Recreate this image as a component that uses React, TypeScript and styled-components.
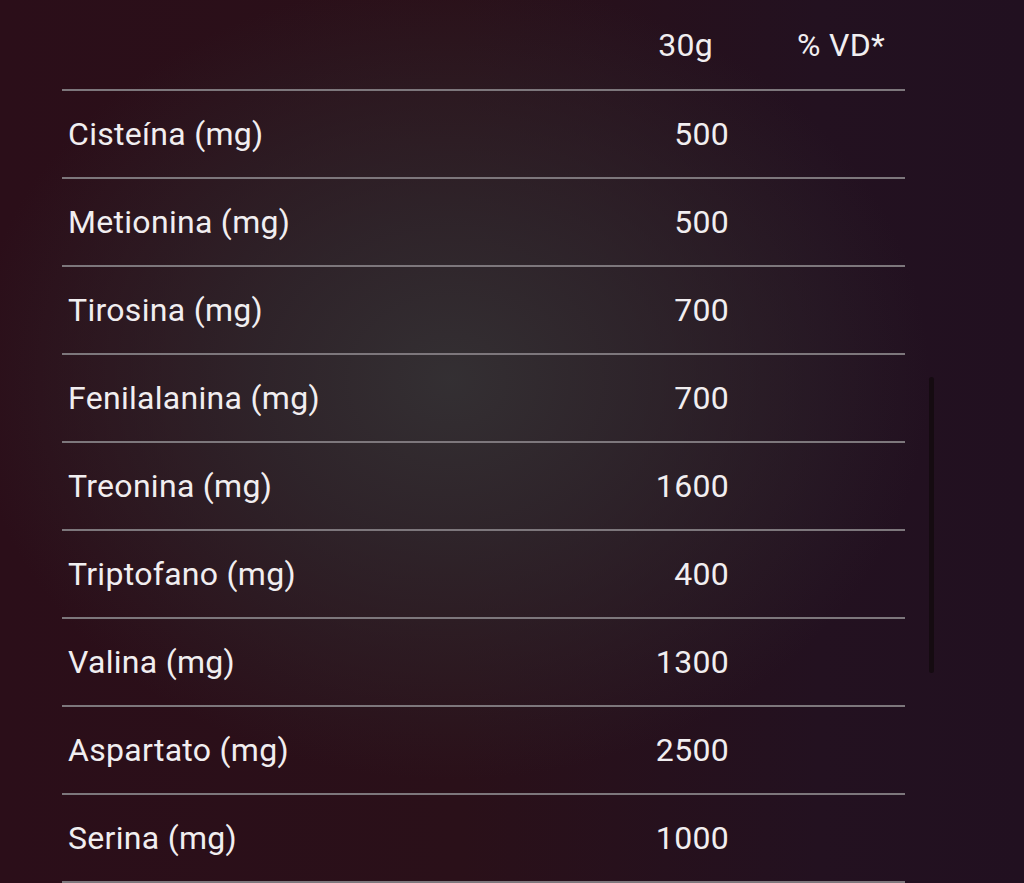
import styled, { createGlobalStyle } from 'styled-components';

interface Nutrient {
  name: string;
  amount: string;
  vd?: string;
}

const nutrients: Nutrient[] = [
  { name: 'Cisteína (mg)', amount: '500' },
  { name: 'Metionina (mg)', amount: '500' },
  { name: 'Tirosina (mg)', amount: '700' },
  { name: 'Fenilalanina (mg)', amount: '700' },
  { name: 'Treonina (mg)', amount: '1600' },
  { name: 'Triptofano (mg)', amount: '400' },
  { name: 'Valina (mg)', amount: '1300' },
  { name: 'Aspartato (mg)', amount: '2500' },
  { name: 'Serina (mg)', amount: '1000' },
];

const GlobalStyle = createGlobalStyle`
  html, body {
    margin: 0;
    padding: 0;
    height: 100%;
    overflow: hidden;
  }
  body {
    font-family: Roboto, "Liberation Sans", sans-serif;
    background: #260e18;
  }
`;

const Page = styled.div`
  position: relative;
  width: 1024px;
  height: 883px;
  overflow: hidden;
  background:
    radial-gradient(ellipse 480px 400px at 450px 380px, rgba(52, 49, 52, 0.95) 0%, rgba(48, 42, 47, 0.75) 40%, rgba(40, 22, 32, 0) 100%),
    linear-gradient(90deg, #2b0e19 0%, #2a1019 45%, #231120 80%, #211020 100%);
`;

const Table = styled.div`
  margin-left: 62px;
  width: 843px;
  display: grid;
  grid-template-columns: 1fr 140px 176px;
  color: #f1eef0;
  font-size: 32px;
  letter-spacing: 0.3px;
`;

const Cell = styled.div<{ $align?: 'left' | 'right'; $header?: boolean; $pad?: string }>`
  height: ${p => (p.$header ? '89px' : '86px')};
  border-bottom: 2px solid #7d777c;
  display: flex;
  align-items: center;
  justify-content: ${p => (p.$align === 'right' ? 'flex-end' : 'flex-start')};
  padding: ${p => p.$pad ?? '0'};
  box-sizing: content-box;
  white-space: nowrap;
`;

const Scrollbar = styled.div`
  position: absolute;
  left: 929px;
  top: 377px;
  width: 5px;
  height: 296px;
  border-radius: 3px;
  background: #150b11;
`;

export default function App() {
  return (
    <>
      <GlobalStyle />
      <Page>
        <Table>
          <Cell $header />
          <Cell $header $align="right" $pad="0 16px 0 0">30g</Cell>
          <Cell $header $pad="0 0 0 68px">% VD*</Cell>
          {nutrients.map(n => (
            <>
              <Cell key={n.name} $pad="0 0 0 6px">{n.name}</Cell>
              <Cell $align="right">{n.amount}</Cell>
              <Cell>{n.vd ?? ''}</Cell>
            </>
          ))}
        </Table>
        <Scrollbar />
      </Page>
    </>
  );
}
